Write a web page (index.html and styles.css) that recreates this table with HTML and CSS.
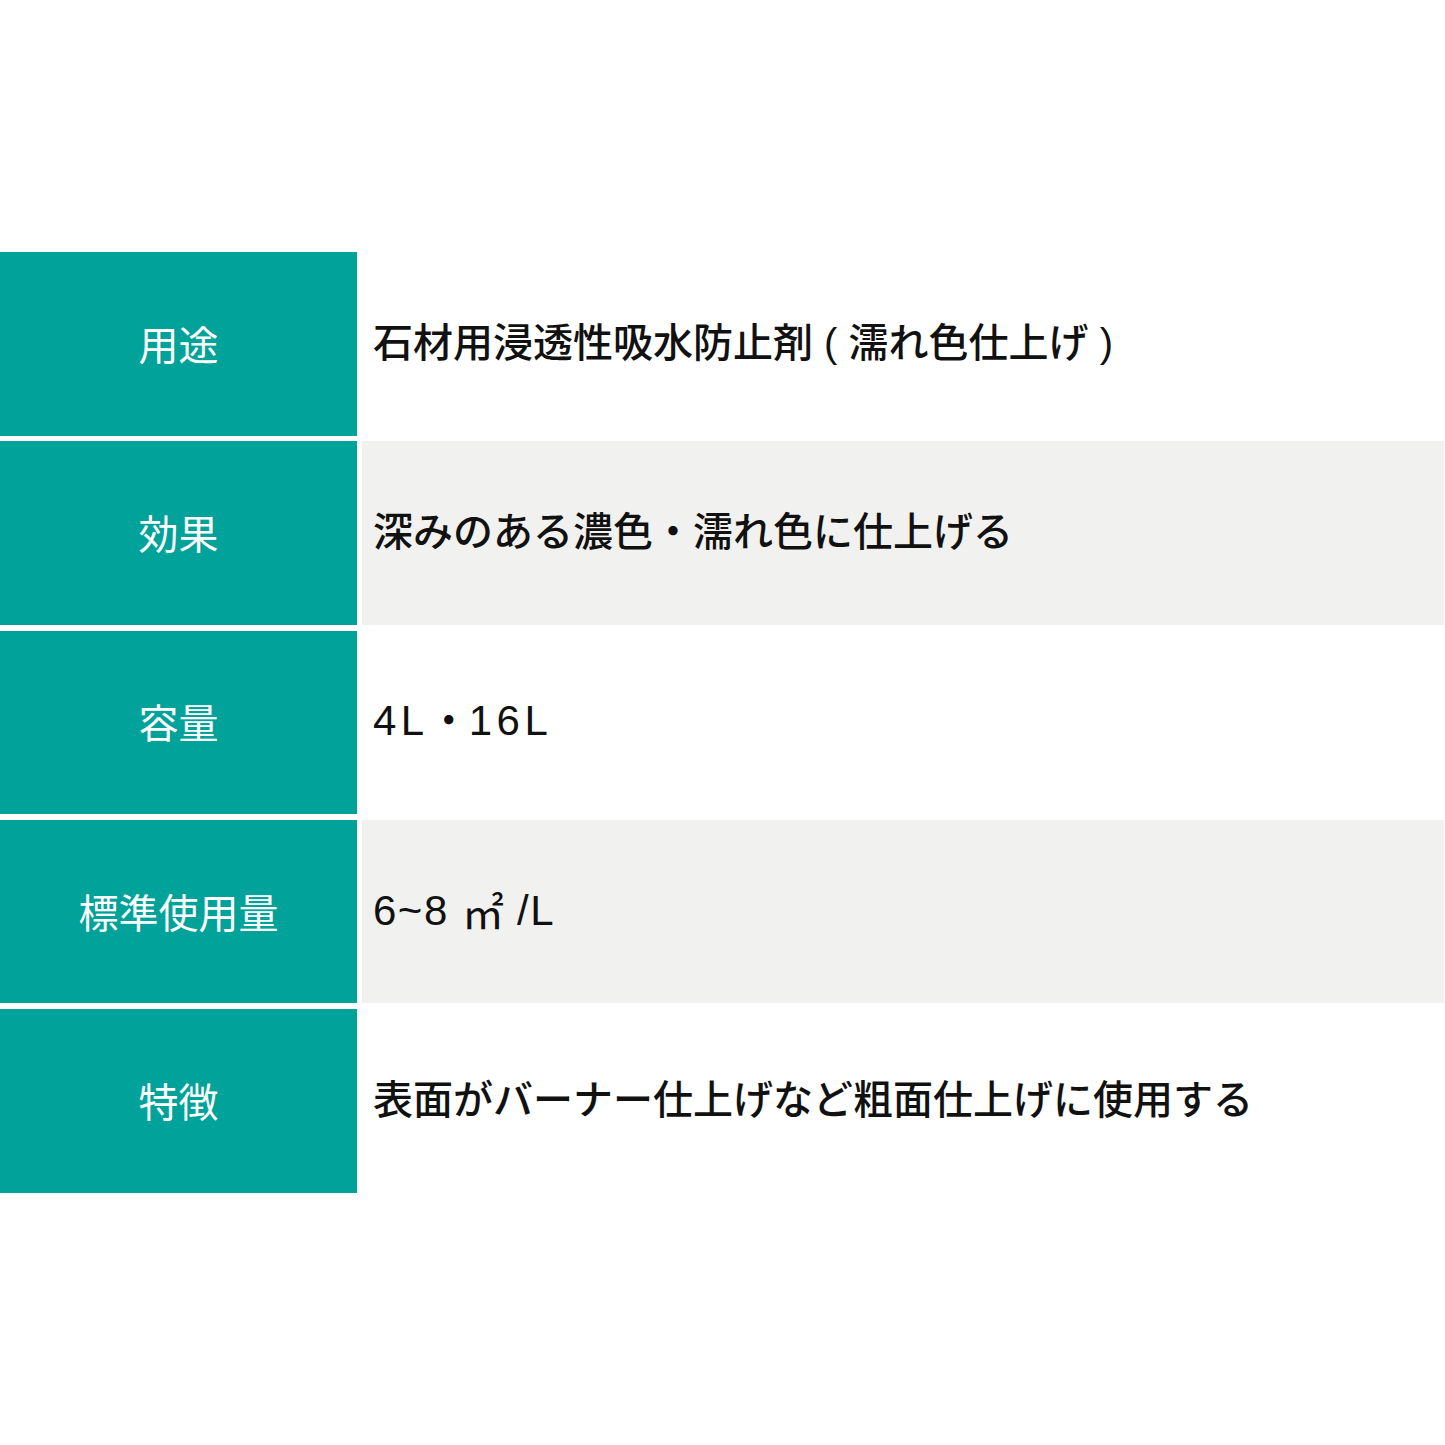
FILE: index.html
```html
<!DOCTYPE html>
<html lang="ja">
<head>
<meta charset="utf-8">
<title>製品仕様</title>
<link rel="stylesheet" href="styles.css">
</head>
<body>
<div class="spec">
  <div class="row">
    <div class="label">用途</div>
    <div class="value">石材用浸透性吸水防止剤 ( 濡れ色仕上げ )</div>
  </div>
  <div class="row alt">
    <div class="label">効果</div>
    <div class="value">深みのある濃色・濡れ色に仕上げる</div>
  </div>
  <div class="row">
    <div class="label">容量</div>
    <div class="value"><span class="num wide">4L</span>・<span class="num wide">16L</span></div>
  </div>
  <div class="row alt">
    <div class="label">標準使用量</div>
    <div class="value"><span class="num">6~8 </span><span class="unit">㎡</span><span class="num"> /L</span></div>
  </div>
  <div class="row">
    <div class="label">特徴</div>
    <div class="value">表面がバーナー仕上げなど粗面仕上げに使用する</div>
  </div>
</div>
</body>
</html>
```

FILE: styles.css
```css
html, body {
  margin: 0;
  padding: 0;
  background: #ffffff;
}

body {
  font-family: "Noto Sans CJK JP", "Noto Sans", sans-serif;
  width: 1445px;
  height: 1445px;
  overflow: hidden;
}

.spec {
  padding-top: 252px;
  display: flex;
  flex-direction: column;
  gap: 5.8px;
  width: 1444px;
}

.row {
  display: grid;
  grid-template-columns: 357px 1fr;
  column-gap: 5px;
  height: 183.5px;
}

.label {
  background: #00a29a;
  color: #ffffff;
  font-size: 40px;
  display: flex;
  align-items: center;
  justify-content: center;
  line-height: 1;
  padding-bottom: 2px;
}

.value {
  background: #ffffff;
  color: #111111;
  font-family: "Liberation Sans", "Noto Sans CJK JP", sans-serif;
  font-size: 40px;
  font-weight: 500;
  display: flex;
  align-items: center;
  padding-left: 11px;
  padding-bottom: 2px;
  line-height: 1;
  white-space: pre;
}

.num {
  font-size: 42px;
  font-weight: 400;
  letter-spacing: 1.5px;
}

.num.wide {
  letter-spacing: 4.5px;
}

.unit {
  font-family: "Noto Sans CJK JP", sans-serif;
  font-weight: 400;
  font-size: 42px;
}

.row.alt .value {
  background: #f1f1ef;
}
```
